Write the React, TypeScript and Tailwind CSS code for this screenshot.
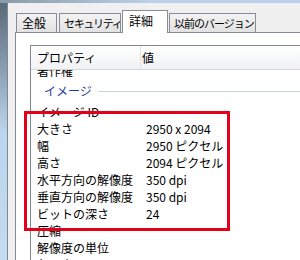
import React from "react";

const FONT = { fontFamily: '"Noto Sans CJK JP", "Noto Sans", sans-serif' };

type Row = { k: string; v?: string };

const rows: Row[] = [
  { k: "イメージ ID" },
  { k: "大きさ", v: "2950 x 2094" },
  { k: "幅", v: "2950 ピクセル" },
  { k: "高さ", v: "2094 ピクセル" },
  { k: "水平方向の解像度", v: "350 dpi" },
  { k: "垂直方向の解像度", v: "350 dpi" },
  { k: "ビットの深さ", v: "24" },
  { k: "圧縮" },
  { k: "解像度の単位" },
  { k: "色の表現" },
];

function RowView({ r }: { r: Row }) {
  return (
    <div className="flex h-[17px] items-center text-[12px] leading-none text-black">
      <div className="w-[110px] shrink-0 pl-[6px] whitespace-nowrap">{r.k}</div>
      <div className="pl-[5px] whitespace-pre">{r.v ?? ""}</div>
    </div>
  );
}

export default function App() {
  return (
    <div className="w-[300px] h-[260px] overflow-hidden flex flex-col bg-[#f0f0f0]" style={FONT}>
      <div className="h-[3px] shrink-0 bg-gradient-to-r from-[#8a9aa8] via-[#b9d1ea] to-[#b9d1ea]" />
      <div className="flex flex-1 min-h-0">
        <div className="w-[8px] shrink-0 bg-gradient-to-b from-[#5a6a7a] via-[#bcd4ec] to-[#c4dbf0] border-r border-[#7c8a98]" />
        <div className="flex-1 min-w-0 flex flex-col pl-[7px] pt-[7px]">
          {/* tabs */}
          <div className="flex items-end h-[22px] pl-[1px] gap-[2px] whitespace-nowrap">
            <div className="w-[41px] h-[19px] flex items-center pl-[5px] bg-gradient-to-b from-[#f3f3f3] to-[#e2e2e2] border border-b-0 border-[#898c95] text-[12px] leading-none overflow-hidden">
              全般
            </div>
            <div className="w-[62px] h-[19px] flex items-center pl-[4px] bg-gradient-to-b from-[#f3f3f3] to-[#e2e2e2] border border-b-0 border-[#898c95] text-[11px] tracking-[-1.3px] leading-none overflow-hidden">
              セキュリティ
            </div>
            <div className="w-[46px] h-[23px] -mb-[1px] -mx-[1px] relative z-10 flex items-start pt-[3px] pl-[6px] bg-white border border-b-0 border-[#898c95] text-[12px] leading-[14px] overflow-hidden">
              詳細
            </div>
            <div className="w-[87px] h-[19px] flex items-center pl-[4px] bg-gradient-to-b from-[#f3f3f3] to-[#e2e2e2] border border-b-0 border-[#898c95] text-[11px] tracking-[-1px] leading-none overflow-hidden">
              以前のバージョン
            </div>
          </div>
          {/* panel */}
          <div className="flex-1 bg-white border-l border-t border-[#898c95] pl-[14px] pt-[12px] relative">
            <div className="h-full border-l border-t border-[#828790] flex flex-col">
              {/* header */}
              <div className="h-[24px] shrink-0 flex items-center bg-gradient-to-b from-white to-[#f1f2f4] border-b border-[#d5d5d5] text-[12px] leading-none relative z-10">
                <div className="w-[110px] shrink-0 pl-[6px] h-full flex items-center border-r border-[#e3e4e6]">プロパティ</div>
                <div className="pl-[1px]">値</div>
              </div>
              {/* body */}
              <div className="flex-1 overflow-hidden">
                <div className="-mt-[8px]">
                  <RowView r={{ k: "著作権" }} />
                  <div className="h-[24px] flex items-center pl-[13px] gap-[6px]">
                    <span className="text-[12px] leading-none text-[#1e3c9a]">イメージ</span>
                    <div className="flex-1 h-px bg-[#c8d3e4]" />
                  </div>
                  {rows.map((r) => (
                    <RowView key={r.k} r={r} />
                  ))}
                </div>
              </div>
            </div>
            {/* red highlight box overlay */}
            <div className="absolute left-[8px] top-[78px] w-[206px] h-[120px] border-[3px] border-[#e2001a] pointer-events-none" />
          </div>
        </div>
      </div>
    </div>
  );
}
